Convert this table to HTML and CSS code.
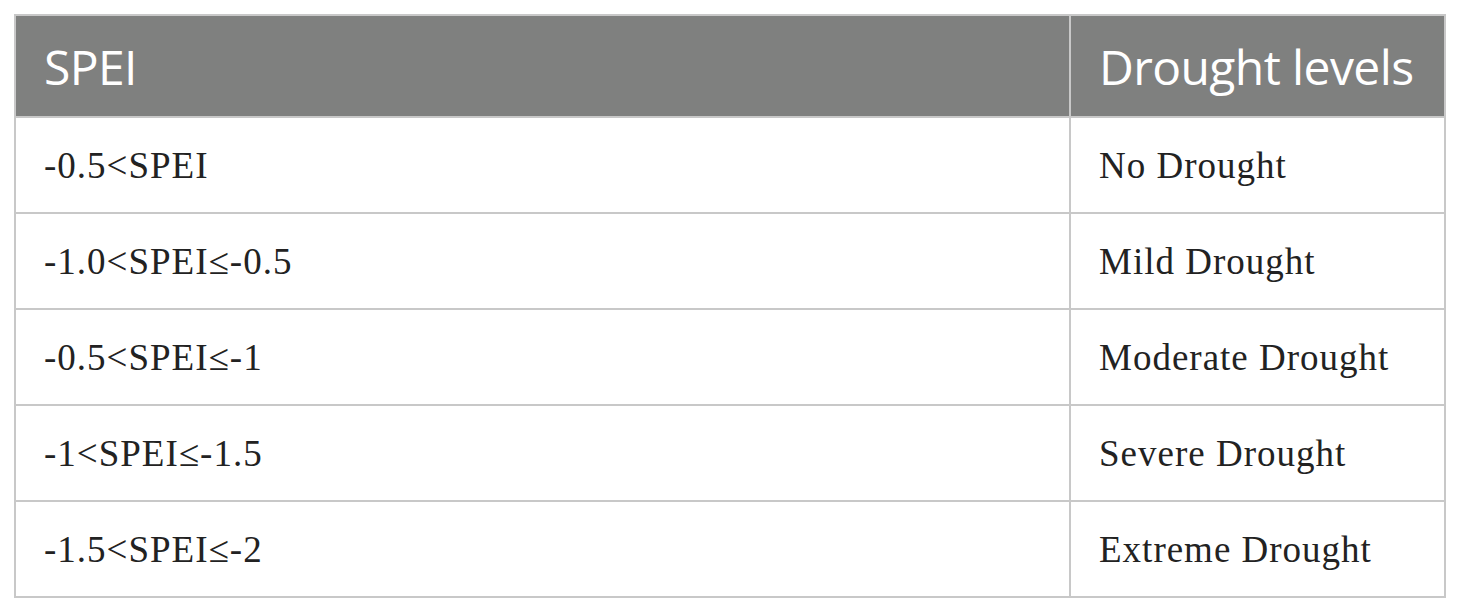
FILE: index.html
```html
<!DOCTYPE html>
<html>
<head>
<meta charset="utf-8">
<link rel="stylesheet" href="styles.css">
</head>
<body>
<table class="tbl">
  <thead>
    <tr><th class="c1">SPEI</th><th class="c2">Drought levels</th></tr>
  </thead>
  <tbody>
    <tr><td>-0.5&lt;SPEI</td><td>No Drought</td></tr>
    <tr><td>-1.0&lt;SPEI≤-0.5</td><td>Mild Drought</td></tr>
    <tr><td>-0.5&lt;SPEI≤-1</td><td>Moderate Drought</td></tr>
    <tr><td>-1&lt;SPEI≤-1.5</td><td>Severe Drought</td></tr>
    <tr><td>-1.5&lt;SPEI≤-2</td><td>Extreme Drought</td></tr>
  </tbody>
</table>
</body>
</html>
```
FILE: styles.css
```css
html, body { margin: 0; padding: 0; background: #fff; }
body { padding: 14px 0 0 14px; }
.tbl {
  border-collapse: collapse;
  width: 1432px;
  table-layout: fixed;
}
.tbl th, .tbl td {
  border: 2px solid #c8c8c8;
  text-align: left;
  padding: 0 0 0 28px;
  vertical-align: middle;
}
.tbl th {
  background: #7f807f;
  color: #fff;
  font-family: "Open Sans", sans-serif;
  font-weight: 400;
  font-size: 48px;
  letter-spacing: -0.6px;
  height: 100px;
}
.tbl th.c1 { width: 1025px; }
.tbl td {
  font-family: "Liberation Serif", serif;
  font-size: 37px;
  letter-spacing: 1px;
  color: #222;
  height: 94px;
}
```
